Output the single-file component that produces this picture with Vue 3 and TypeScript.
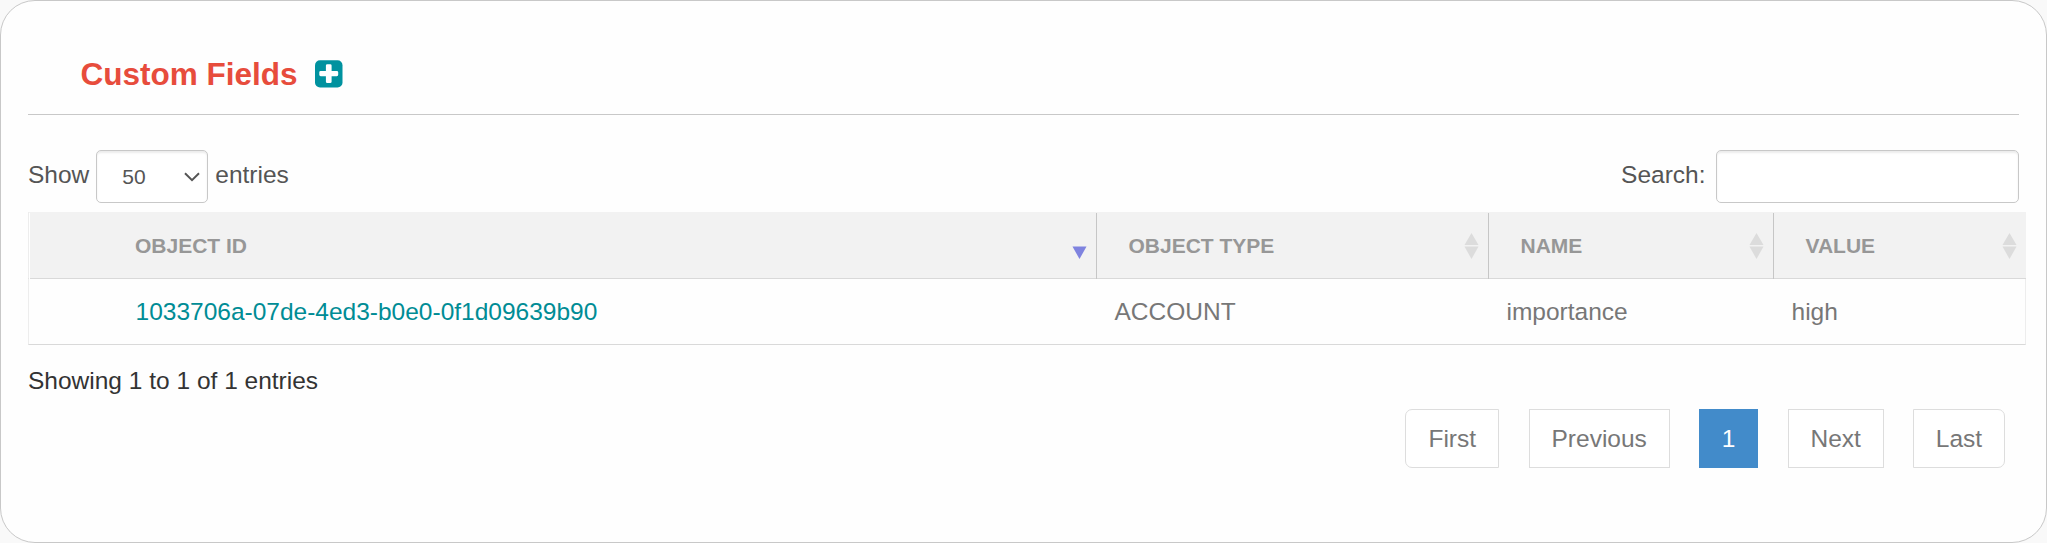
<script setup lang="ts">
import { ref } from 'vue'

interface Column { label: string; key: 'id' | 'type' | 'name' | 'value'; sorted: boolean }
interface Row { id: string; type: string; name: string; value: string }

const columns: Column[] = [
  { label: 'Object ID', key: 'id', sorted: true },
  { label: 'Object Type', key: 'type', sorted: false },
  { label: 'Name', key: 'name', sorted: false },
  { label: 'Value', key: 'value', sorted: false },
]
const rows: Row[] = [
  { id: '1033706a-07de-4ed3-b0e0-0f1d09639b90', type: 'ACCOUNT', name: 'importance', value: 'high' },
]
const pages: string[] = ['First', 'Previous', '1', 'Next', 'Last']
const pageSize = ref('50')
const search = ref('')
</script>

<template>
  <section class="card">
    <header class="head">
      <h2 class="title">Custom Fields</h2>
      <svg class="plus" viewBox="0 0 28 28" aria-label="Add">
        <rect x="0" y="0.200" width="27.500" height="27.200" rx="5" fill="#00929f" />
        <path d="M12.300 4.200h2.900a1.400 1.400 0 0 1 1.400 1.400v5.300h5.200a1.400 1.400 0 0 1 1.400 1.400v2.500a1.400 1.400 0 0 1-1.400 1.400h-5.200v5.500a1.400 1.400 0 0 1-1.400 1.400h-2.900a1.400 1.400 0 0 1-1.400-1.400v-5.500H5.700a1.400 1.400 0 0 1-1.400-1.400v-2.500a1.400 1.400 0 0 1 1.400-1.400h5.200V5.600a1.400 1.400 0 0 1 1.400-1.400z" fill="#fff" />
      </svg>
    </header>

    <div class="controls">
      <label class="length">
        <span>Show</span>
        <span class="select">
          <select v-model="pageSize">
            <option>10</option>
            <option>25</option>
            <option>50</option>
          </select>
          <svg class="chevron" viewBox="0 0 16 10"><path d="M1 1.300 8 8.200l7-6.900" fill="none" stroke="#555" stroke-width="2" /></svg>
        </span>
        <span>entries</span>
      </label>
      <label class="search">
        <span>Search:</span>
        <input v-model="search" type="text" />
      </label>
    </div>

    <div class="table">
      <div class="row thead">
        <div v-for="c in columns" :key="c.key" class="th">
          <span>{{ c.label }}</span>
          <svg class="sort" viewBox="0 0 15 26">
            <path v-if="!c.sorted" d="M7.500 0 14.500 12H.5z" fill="#dcdcdc" />
            <path d="M.5 13.500h14L7.500 26z" :fill="c.sorted ? '#7f83df' : '#dcdcdc'" />
          </svg>
        </div>
      </div>
      <div v-for="r in rows" :key="r.id" class="row tbody">
        <div v-for="c in columns" :key="c.key" class="td" :class="{ link: c.key === 'id' }">{{ r[c.key] }}</div>
      </div>
    </div>

    <div class="info">Showing 1 to 1 of 1 entries</div>
    <nav class="pager">
      <button v-for="p in pages" :key="p" type="button" :class="{ active: p === '1' }">{{ p }}</button>
    </nav>
  </section>
</template>

<style>
body {
  background: #f9f9f9;
}
</style>

<style scoped>
.card,
.card * {
  box-sizing: border-box;
}
.card {
  height: 543px;
  padding: 0 27px;
  border: 1px solid #c8c8c8;
  border-radius: 35px;
  background: #fefefe;
  font-family: "Liberation Sans", Arial, sans-serif;
  font-size: 24.5px;
  line-height: 35px;
  color: #333;
  overflow: hidden;
}
.head {
  display: flex;
  height: 114px;
  padding: 56px 0 0 52.500px;
  border-bottom: 1px solid #c8c8c8;
}
.title {
  margin: 0;
  font-size: 31.500px;
  line-height: 35px;
  font-weight: 700;
  color: #e74c3c;
}
.plus {
  width: 28px;
  height: 28px;
  margin: 3px 0 0 17px;
}
.controls {
  display: flex;
  justify-content: space-between;
  height: 97px;
  padding-top: 35px;
  color: #555;
}
.length,
.search {
  display: flex;
  line-height: 49px;
}
.select {
  position: relative;
  width: 112px;
  height: 53px;
  margin: 0 7px 0 7px;
}
select,
input {
  display: block;
  height: 53px;
  border: 1px solid #c8c8c8;
  border-radius: 5px;
  background: #fff;
  box-shadow: inset 0 2px 2px rgba(0, 0, 0, 0.075);
  font-family: inherit;
  font-size: 21px;
  color: #555;
  outline: none;
}
select {
  width: 112px;
  padding: 0 25px;
  appearance: none;
}
.chevron {
  position: absolute;
  right: 8px;
  top: 22px;
  width: 16px;
  height: 10px;
}
input {
  width: 303px;
  margin-left: 10.500px;
}
.table {
  width: 1998px;
}
.row {
  display: grid;
  grid-template-columns: 1067px 392px 285px 1fr;
}
.thead {
  height: 67px;
  padding-top: 1px;
  border-left: 1px solid #ededed;
  border-bottom: 1px solid #d9d9d9;
  background: #f2f2f2;
}
.th {
  display: flex;
  justify-content: space-between;
  padding: 0 9.500px 0 31.500px;
  border-left: 1px solid #c6c6c6;
  font-size: 21px;
  font-weight: 700;
  line-height: 66px;
  color: #979797;
  text-transform: uppercase;
}
.th:first-child {
  padding-left: 105px;
  border-left-color: #fff;
}
.sort {
  width: 15px;
  height: 26px;
  margin-top: 20px;
}
.tbody {
  height: 66px;
  border: 1px solid #ededed;
  border-top: 0;
  border-bottom-color: #d9d9d9;
}
.td {
  padding-left: 18.500px;
  line-height: 66px;
  color: #777;
}
.td.link {
  padding-left: 106.500px;
  color: #008c95;
}
.info {
  padding-top: 18px;
}
.pager {
  display: flex;
  justify-content: flex-end;
  gap: 29.200px;
  padding: 11px 14px 0 0;
}
button {
  height: 59px;
  padding: 0 21.900px;
  border: 1px solid #ddd;
  background: #fff;
  font: inherit;
  color: #777;
}
button:first-child {
  padding: 0 22.400px;
  border-radius: 7px 0 0 7px;
}
button:last-child {
  border-radius: 0 7px 7px 0;
}
button.active {
  border-color: #428bca;
  background: #428bca;
  color: #fff;
}
</style>
